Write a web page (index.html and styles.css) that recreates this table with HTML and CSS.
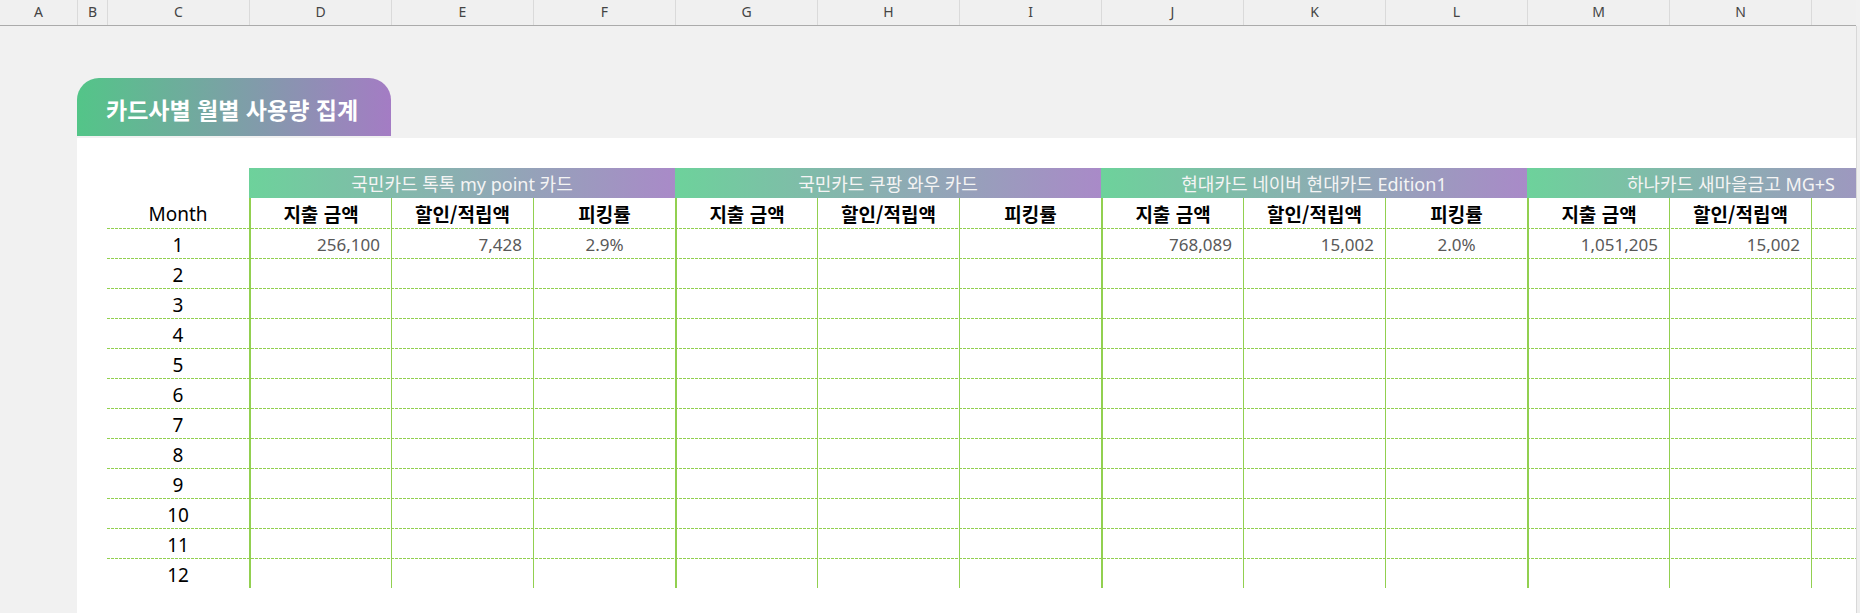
FILE: index.html
```html
<!DOCTYPE html>
<html lang="ko">
<head>
<meta charset="utf-8">
<title>카드사별 월별 사용량 집계</title>
<link rel="stylesheet" href="styles.css">
</head>
<body>
<div class="app">
  <div class="colbar">
    <div class="ch ch-a">A</div>
    <div class="ch ch-b">B</div>
    <div class="ch">C</div>
    <div class="ch">D</div>
    <div class="ch">E</div>
    <div class="ch">F</div>
    <div class="ch">G</div>
    <div class="ch">H</div>
    <div class="ch">I</div>
    <div class="ch">J</div>
    <div class="ch">K</div>
    <div class="ch">L</div>
    <div class="ch">M</div>
    <div class="ch">N</div>
    <div class="ch ch-o"></div>
  </div>
  <div class="body">
    <div class="sheet">
      <div class="col-a"></div>
      <div class="content">
        <div class="top">
          <div class="tab">카드사별 월별 사용량 집계</div>
        </div>
        <div class="white">
          <div class="table">
            <div class="row">
              <div class="cell"></div>
              <div class="grp">국민카드 톡톡 my point 카드</div>
              <div class="grp">국민카드 쿠팡 와우 카드</div>
              <div class="grp">현대카드 네이버 현대카드 Edition1</div>
              <div class="grp grp-last">하나카드 새마을금고 MG+S</div>
            </div>
            <div class="row head">
              <div class="cell month">Month</div>
              <div class="cell g h">지출 금액</div><div class="cell v h">할인/적립액</div><div class="cell v h">피킹률</div>
              <div class="cell g h">지출 금액</div><div class="cell v h">할인/적립액</div><div class="cell v h">피킹률</div>
              <div class="cell g h">지출 금액</div><div class="cell v h">할인/적립액</div><div class="cell v h">피킹률</div>
              <div class="cell g h">지출 금액</div><div class="cell v h">할인/적립액</div><div class="cell v o"></div>
            </div>
            <div class="row data">
              <div class="cell month">1</div>
              <div class="cell g num">256,100</div><div class="cell v num">7,428</div><div class="cell v pct">2.9%</div>
              <div class="cell g num"></div><div class="cell v num"></div><div class="cell v pct"></div>
              <div class="cell g num">768,089</div><div class="cell v num">15,002</div><div class="cell v pct">2.0%</div>
              <div class="cell g num">1,051,205</div><div class="cell v num">15,002</div><div class="cell v o"></div>
            </div>
            <div class="row data">
              <div class="cell month">2</div>
              <div class="cell g"></div><div class="cell v"></div><div class="cell v"></div>
              <div class="cell g"></div><div class="cell v"></div><div class="cell v"></div>
              <div class="cell g"></div><div class="cell v"></div><div class="cell v"></div>
              <div class="cell g"></div><div class="cell v"></div><div class="cell v o"></div>
            </div>
            <div class="row data">
              <div class="cell month">3</div>
              <div class="cell g"></div><div class="cell v"></div><div class="cell v"></div>
              <div class="cell g"></div><div class="cell v"></div><div class="cell v"></div>
              <div class="cell g"></div><div class="cell v"></div><div class="cell v"></div>
              <div class="cell g"></div><div class="cell v"></div><div class="cell v o"></div>
            </div>
            <div class="row data">
              <div class="cell month">4</div>
              <div class="cell g"></div><div class="cell v"></div><div class="cell v"></div>
              <div class="cell g"></div><div class="cell v"></div><div class="cell v"></div>
              <div class="cell g"></div><div class="cell v"></div><div class="cell v"></div>
              <div class="cell g"></div><div class="cell v"></div><div class="cell v o"></div>
            </div>
            <div class="row data">
              <div class="cell month">5</div>
              <div class="cell g"></div><div class="cell v"></div><div class="cell v"></div>
              <div class="cell g"></div><div class="cell v"></div><div class="cell v"></div>
              <div class="cell g"></div><div class="cell v"></div><div class="cell v"></div>
              <div class="cell g"></div><div class="cell v"></div><div class="cell v o"></div>
            </div>
            <div class="row data">
              <div class="cell month">6</div>
              <div class="cell g"></div><div class="cell v"></div><div class="cell v"></div>
              <div class="cell g"></div><div class="cell v"></div><div class="cell v"></div>
              <div class="cell g"></div><div class="cell v"></div><div class="cell v"></div>
              <div class="cell g"></div><div class="cell v"></div><div class="cell v o"></div>
            </div>
            <div class="row data">
              <div class="cell month">7</div>
              <div class="cell g"></div><div class="cell v"></div><div class="cell v"></div>
              <div class="cell g"></div><div class="cell v"></div><div class="cell v"></div>
              <div class="cell g"></div><div class="cell v"></div><div class="cell v"></div>
              <div class="cell g"></div><div class="cell v"></div><div class="cell v o"></div>
            </div>
            <div class="row data">
              <div class="cell month">8</div>
              <div class="cell g"></div><div class="cell v"></div><div class="cell v"></div>
              <div class="cell g"></div><div class="cell v"></div><div class="cell v"></div>
              <div class="cell g"></div><div class="cell v"></div><div class="cell v"></div>
              <div class="cell g"></div><div class="cell v"></div><div class="cell v o"></div>
            </div>
            <div class="row data">
              <div class="cell month">9</div>
              <div class="cell g"></div><div class="cell v"></div><div class="cell v"></div>
              <div class="cell g"></div><div class="cell v"></div><div class="cell v"></div>
              <div class="cell g"></div><div class="cell v"></div><div class="cell v"></div>
              <div class="cell g"></div><div class="cell v"></div><div class="cell v o"></div>
            </div>
            <div class="row data">
              <div class="cell month">10</div>
              <div class="cell g"></div><div class="cell v"></div><div class="cell v"></div>
              <div class="cell g"></div><div class="cell v"></div><div class="cell v"></div>
              <div class="cell g"></div><div class="cell v"></div><div class="cell v"></div>
              <div class="cell g"></div><div class="cell v"></div><div class="cell v o"></div>
            </div>
            <div class="row data">
              <div class="cell month">11</div>
              <div class="cell g"></div><div class="cell v"></div><div class="cell v"></div>
              <div class="cell g"></div><div class="cell v"></div><div class="cell v"></div>
              <div class="cell g"></div><div class="cell v"></div><div class="cell v"></div>
              <div class="cell g"></div><div class="cell v"></div><div class="cell v o"></div>
            </div>
            <div class="row data">
              <div class="cell month">12</div>
              <div class="cell g"></div><div class="cell v"></div><div class="cell v"></div>
              <div class="cell g"></div><div class="cell v"></div><div class="cell v"></div>
              <div class="cell g"></div><div class="cell v"></div><div class="cell v"></div>
              <div class="cell g"></div><div class="cell v"></div><div class="cell v o"></div>
            </div>
          </div>
        </div>
      </div>
    </div>
    <div class="vstrip"></div>
  </div>
</div>
</body>
</html>
```

FILE: styles.css
```css
html, body {
  margin: 0;
  padding: 0;
}
body {
  background: #f1f1f1;
  font-family: "Noto Sans", "Noto Sans CJK KR", sans-serif;
  overflow: hidden;
}
.app {
  width: 1860px;
  height: 613px;
  display: flex;
  flex-direction: column;
}
.colbar {
  display: flex;
  width: 1856px;
  height: 26px;
  flex: none;
  box-sizing: border-box;
  border-bottom: 1px solid #ababab;
  background: #f0f0f0;
}
.ch {
  width: 142px;
  height: 25px;
  flex: none;
  box-sizing: border-box;
  border-left: 1px solid #dadada;
  display: flex;
  align-items: center;
  justify-content: center;
  font-size: 14px;
  color: #444;
  padding-bottom: 2px;
}
.ch-a { width: 77px; border-left: none; }
.ch-b { width: 30px; }
.ch-o { flex: 1; }

.body {
  flex: 1;
  display: flex;
  min-height: 0;
}
.sheet {
  width: 1856px;
  flex: none;
  display: flex;
}
.col-a {
  width: 77px;
  flex: none;
}
.content {
  flex: 1;
  min-width: 0;
  display: flex;
  flex-direction: column;
}
.top {
  height: 112px;
  flex: none;
  box-sizing: border-box;
  padding-top: 52px;
}
.tab {
  width: 314px;
  height: 58px;
  box-sizing: border-box;
  border-radius: 22px 22px 0 0;
  background: linear-gradient(90deg, #53c588, #a47cc4);
  color: #fff;
  font-family: "Noto Sans CJK KR", sans-serif;
  font-weight: 700;
  font-size: 23px;
  display: flex;
  align-items: center;
  padding: 4px 0 0 29px;
}
.white {
  flex: 1;
  background: #fff;
  overflow: hidden;
  padding: 30px 0 0 30px;
}
.vstrip {
  flex: 1;
  border-left: 1px solid #d8d8d8;
  background: #efefef;
}

.table {
  width: 1828px;
}
.row {
  display: flex;
  height: 30px;
}
.row.data {
  background: repeating-linear-gradient(90deg, #92d050 0 3px, transparent 3px 4px) top left / 100% 1px no-repeat;
}
.cell {
  width: 142px;
  height: 30px;
  flex: none;
  box-sizing: border-box;
  display: flex;
  align-items: center;
  justify-content: center;
}
.cell.o { width: 124px; }
.cell.v { border-left: 1px solid #92d050; }
.cell.g { border-left: 2px solid #92d050; }

.grp {
  width: 426px;
  height: 30px;
  flex: none;
  display: flex;
  align-items: center;
  justify-content: center;
  background: linear-gradient(90deg, #6dd29b, #a98ac8);
  color: #f4f4f4;
  font-size: 18px;
}
.grp-last { width: 408px; }

.month {
  color: #000;
  font-size: 19px;
  padding-top: 3px;
}
.head .month { padding-top: 1px; }
.h {
  font-family: "Noto Sans CJK KR", sans-serif;
  font-weight: 700;
  font-size: 19px;
  color: #000;
}
.num, .pct {
  font-size: 17px;
  color: #595959;
  padding-top: 3px;
}
.num {
  justify-content: flex-end;
  padding-right: 11px;
}
```
